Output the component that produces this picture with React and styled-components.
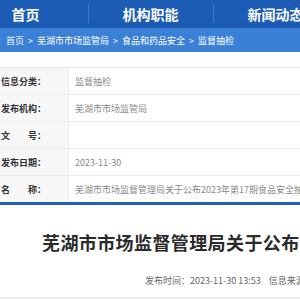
import styled, { createGlobalStyle } from 'styled-components'

const GlobalStyle = createGlobalStyle`
  html, body {
    margin: 0;
    padding: 0;
    background: #fff;
    overflow: hidden;
  }
  body {
    font-family: "Noto Sans CJK SC", "Noto Sans", sans-serif;
  }
`

const navItems = ['首页', '机构职能', '新闻动态']

const crumbs = ['首页', '芜湖市市场监管局', '食品和药品安全', '监督抽检']

const infoRows = [
  { label: '信息分类：', value: '监督抽检' },
  { label: '发布机构：', value: '芜湖市市场监管局' },
  { label: '文　　号：', value: '' },
  { label: '发布日期：', value: '2023-11-30' },
  { label: '名　　称：', value: '芜湖市市场监督管理局关于公布2023年第17期食品安全抽检信息的通告' },
]

export default function App() {
  return (
    <Page>
      <GlobalStyle />
      <Nav>
        {navItems.map((item, i) => (
          <NavItem key={item} $first={i === 0}>{item}</NavItem>
        ))}
      </Nav>
      <Breadcrumb>
        <span>：</span>
        {crumbs.map((c, i) => (
          <Crumb key={c}>
            {c}
            {i < crumbs.length - 1 && <Arrow>&gt;</Arrow>}
          </Crumb>
        ))}
      </Breadcrumb>

      <InfoTable>
        {infoRows.map((row) => (
          <InfoRow key={row.label}>
            <Label>{row.label}</Label>
            <Value>{row.value}</Value>
          </InfoRow>
        ))}
      </InfoTable>

      <Article>
        <Title>芜湖市市场监督管理局关于公布2023年第17期食品安全抽检信息的通告</Title>
        <Meta>
          <span>发布时间：2023-11-30 13:53</span>
          <span>信息来源：芜湖市市场监督管理局</span>
        </Meta>
      </Article>
    </Page>
  )
}

const Page = styled.div`
  width: 300px;
  height: 300px;
  overflow: hidden;
  white-space: nowrap;
`

const Nav = styled.nav`
  display: flex;
  height: 28px;
  margin-left: -37px;
  background: #1d5cb4;
`

const NavItem = styled.div`
  flex: 0 0 125px;
  display: flex;
  align-items: center;
  justify-content: center;
  color: #fff;
  font-size: 14px;
  font-weight: 700;
  position: relative;

  & + &::before {
    content: '';
    position: absolute;
    left: 0;
    top: 4px;
    bottom: 5px;
    width: 1px;
    background: #3f78c8;
  }
`

const Breadcrumb = styled.div`
  display: flex;
  align-items: center;
  height: 24px;
  padding-left: 0;
  background: #3a80d6;
  color: #fff;
  font-size: 9px;
  margin-left: -3px;
`

const Crumb = styled.span`
  display: inline-flex;
  align-items: center;
`

const Arrow = styled.span`
  margin: 0 4px;
`

const InfoTable = styled.div`
  margin-top: 15px;
  border-top: 1px solid #e8e8e8;
  border-bottom: 3px solid #1c62b9;
`

const InfoRow = styled.div`
  display: grid;
  grid-template-columns: 69px 1fr;
  height: 26px;

  & + & {
    border-top: 1px solid #ececec;
  }
`

const Label = styled.div`
  display: flex;
  align-items: center;
  padding-left: 1px;
  background: #f7f7f7;
  border-right: 1px solid #ececec;
  color: #333;
  font-size: 9px;
  font-weight: 700;
`

const Value = styled.div`
  display: flex;
  align-items: center;
  padding-left: 6px;
  color: #8a8a8a;
  font-size: 9px;
  overflow: hidden;
`

const Article = styled.div`
  border-bottom: 2px solid #ececec;
  padding: 26px 0 10px;
`

const Title = styled.h1`
  margin: 0;
  padding-left: 42px;
  color: #2b2b2b;
  font-size: 18px;
  font-weight: 700;
  letter-spacing: 0.4px;
  line-height: 22px;
`

const Meta = styled.div`
  display: flex;
  gap: 8px;
  margin-top: 22px;
  padding-left: 145px;
  color: #666;
  font-size: 9px;
  line-height: 12px;
`
